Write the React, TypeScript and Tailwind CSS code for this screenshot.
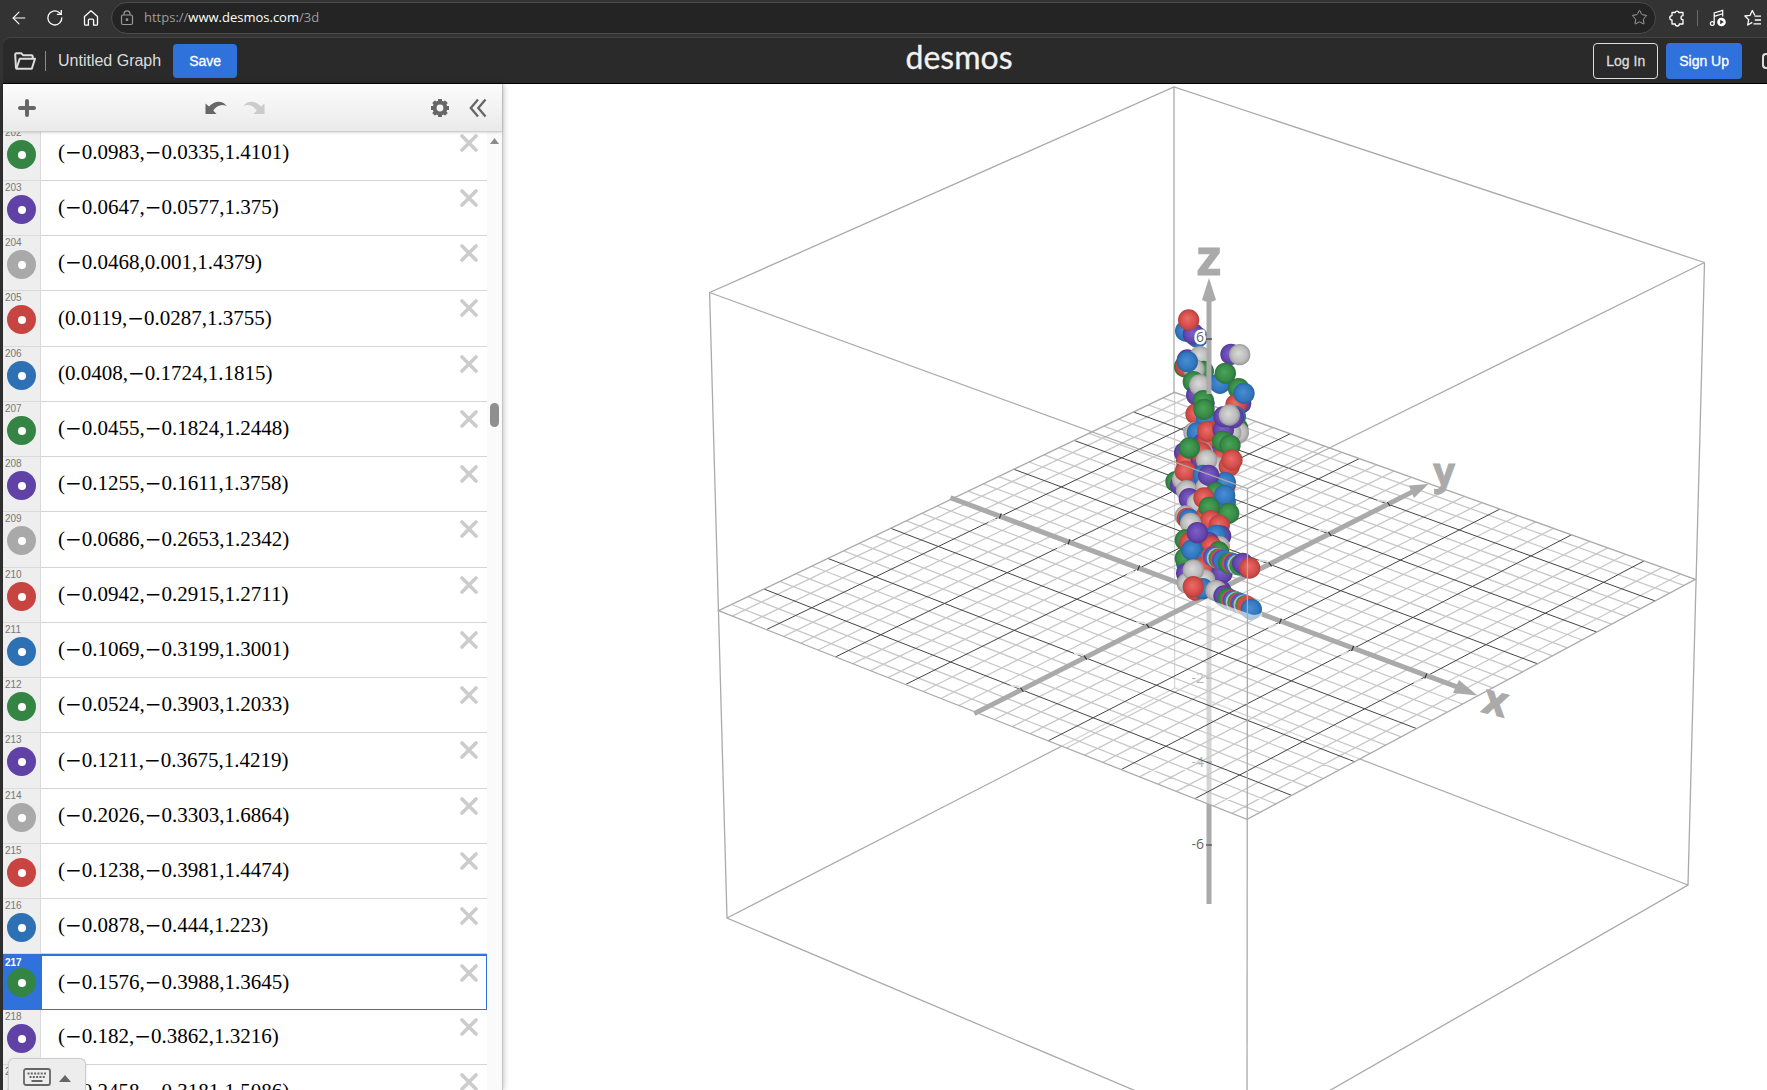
import { ArrowLeft, Star } from 'lucide-react';

type Expression = {
  id: number;
  coords: string;
};

type Point = [number, number];

const ACTIVE_ID = 217;

const expressions: Expression[] = [
  { id: 202, coords: '(−0.0983,−0.0335,1.4101)' },
  { id: 203, coords: '(−0.0647,−0.0577,1.375)' },
  { id: 204, coords: '(−0.0468,0.001,1.4379)' },
  { id: 205, coords: '(0.0119,−0.0287,1.3755)' },
  { id: 206, coords: '(0.0408,−0.1724,1.1815)' },
  { id: 207, coords: '(−0.0455,−0.1824,1.2448)' },
  { id: 208, coords: '(−0.1255,−0.1611,1.3758)' },
  { id: 209, coords: '(−0.0686,−0.2653,1.2342)' },
  { id: 210, coords: '(−0.0942,−0.2915,1.2711)' },
  { id: 211, coords: '(−0.1069,−0.3199,1.3001)' },
  { id: 212, coords: '(−0.0524,−0.3903,1.2033)' },
  { id: 213, coords: '(−0.1211,−0.3675,1.4219)' },
  { id: 214, coords: '(−0.2026,−0.3303,1.6864)' },
  { id: 215, coords: '(−0.1238,−0.3981,1.4474)' },
  { id: 216, coords: '(−0.0878,−0.444,1.223)' },
  { id: 217, coords: '(−0.1576,−0.3988,1.3645)' },
  { id: 218, coords: '(−0.182,−0.3862,1.3216)' },
  { id: 219, coords: '(−0.2458,−0.3181,1.5086)' },
];

// colours repeat every five expressions
const dotColors = ['bg-[#c74440]', 'bg-[#2d70b3]', 'bg-[#348543]', 'bg-[#6042a6]', 'bg-[#a9a9a9]'];

function BrowserBar() {
  return (
    <div className="flex h-[37px] shrink-0 items-center bg-[#333333] pb-0.5 text-white">
      <nav className="flex w-[111px] shrink-0 items-center pl-[9px]">
        <button aria-label="Back" className="w-[37px]">
          <ArrowLeft size={20} strokeWidth={1.3} />
        </button>
        <button aria-label="Refresh" className="w-9">
          <svg width="18" height="18" viewBox="0 0 18 18" fill="none" stroke="currentColor" strokeWidth="1.3">
            <path d="M15.8 8.4a7 7 0 1 1-2.6-4.9L15 5.2" />
            <path d="M15.3 1v4.4h-4.4" />
          </svg>
        </button>
        <button aria-label="Home">
          <svg width="18" height="18" viewBox="0 0 18 18" fill="none" stroke="currentColor" strokeWidth="1.3" strokeLinejoin="round">
            <path d="M2.5 7.6 9 1.8l6.5 5.8v7.6q0 1-1 1h-2.9v-5q0-1-1-1H7.4q-1 0-1 1v5H3.5q-1 0-1-1z" />
          </svg>
        </button>
      </nav>
      <div className="flex h-8 flex-1 items-center rounded-full border border-[#4b4b4b] bg-[#242424] pr-[7px] pl-2">
        <svg width="14" height="16" viewBox="0 0 14 16" fill="none" stroke="#9a9a9a" strokeWidth="1.2">
          <rect x="1.5" y="5" width="11" height="9.5" rx="1.5" />
          <path d="M4 5V3.8a3 3 0 0 1 6 0V5" />
          <circle cx="7" cy="9.7" r="0.8" fill="#9a9a9a" />
        </svg>
        <div className="ml-2.5 flex-1 font-['Open_Sans',sans-serif] text-[13px] text-[#9d9d9d]">
          https://<span className="text-white">www.desmos.com</span>/3d
        </div>
        <button aria-label="Add to favorites" className="text-[#a0a0a0]">
          <Star size={17} strokeWidth={1.4} />
        </button>
      </div>
      <div className="ml-3 flex shrink-0 items-center">
        <button aria-label="Extensions">
          <svg width="18" height="18" viewBox="0 0 18 18" fill="none" stroke="currentColor" strokeWidth="1.3" strokeLinejoin="round">
            <path d="M5 3.5h2.2a1.9 1.9 0 0 1 3.6 0H15v3.2a2 2 0 1 0 0 4v4.3h-3.7a2 2 0 0 1-4 0H4v-4a2.2 2.2 0 0 1 0-4.4V3.5z" />
          </svg>
        </button>
        <span className="mx-[11px] h-4 w-px bg-[#6a6a6a]" />
        <button aria-label="Media controls">
          <svg width="18" height="18" viewBox="0 0 18 18" fill="none" stroke="currentColor" strokeWidth="1.2">
            <circle cx="3.3" cy="14.5" r="1.9" />
            <path d="M5.2 14.5V4l8.5-2.6v6M5.2 7.4l8.5-2.6" />
            <circle cx="12.5" cy="13" r="4.3" fill="white" stroke="none" />
            <path d="M11.2 10.8v4.4l3.7-2.2z" fill="#333333" stroke="none" />
          </svg>
        </button>
        <button aria-label="Favorites" className="mr-[5px] ml-[17px]">
          <svg width="18" height="18" viewBox="0 0 18 18" fill="none" stroke="currentColor" strokeWidth="1.3" strokeLinejoin="round">
            <path d="M10.8 6.2 8.3 1.5 6.1 6.3l-5.2.7 3.8 3.7-1 5.3 4.6-2.6M10.5 7.2H17M10.8 11H17M9.5 14.8H17" />
          </svg>
        </button>
      </div>
    </div>
  );
}

function Header() {
  return (
    <header className="grid h-[47px] shrink-0 grid-cols-[1fr_auto_1fr] items-center rounded-tl-lg border-t border-b border-t-[#444444] border-b-black bg-[#2a2a2a]">
      <div className="flex items-center">
        <button aria-label="Open graph" className="ml-[11px] text-[#dddddd]">
          <svg width="22" height="18" viewBox="0 0 22 18" fill="none" stroke="currentColor" strokeWidth="2" strokeLinejoin="round">
            <path d="M2 16.5 1.2 2.5Q1.2 1.2 2.4 1.2H7.2L9 3.2H17.5Q18.7 3.2 18.7 4.4V6.5" />
            <path d="M2.4 16.7 5.7 6.8H21L17.8 16.7Z" />
          </svg>
        </button>
        <span className="ml-[9px] h-5 w-px bg-[#8a8a8a]" />
        <span className="ml-3 text-base text-[#dddddd]">Untitled Graph</span>
        <button className="ml-3 h-[34px] rounded bg-[#2f72dc] px-4 text-sm text-white [-webkit-text-stroke:0.3px]">Save</button>
      </div>
      <span className="-mt-2 ml-[148px] font-['Lato',sans-serif] text-[32px] leading-9 text-[#f2f2f2] [-webkit-text-stroke:0.3px]">desmos</span>
      <div className="flex items-center justify-end gap-2">
        <button className="h-9 rounded border border-[#dddddd] px-3 text-sm text-[#dddddd] [-webkit-text-stroke:0.3px]">Log In</button>
        <button className="h-9 rounded bg-[#2f72dc] px-[13px] text-sm text-white [-webkit-text-stroke:0.3px]">Sign Up</button>
        <button aria-label="Language" className="ml-3 h-4 w-[5px] rounded-l border-2 border-r-0 border-[#dddddd]" />
      </div>
    </header>
  );
}

function Toolbar() {
  return (
    <div className="relative z-10 flex h-12 shrink-0 items-center border-b border-[#cfcfcf] bg-linear-to-b from-[#fcfcfc] to-[#eaeaea] text-[#666666] shadow-sm">
      <button aria-label="Add item" className="ml-[15px]">
        <svg width="18" height="18" viewBox="0 0 18 18" stroke="currentColor" strokeWidth="4" strokeLinecap="round">
          <path d="M9 2v14M2 9h14" />
        </svg>
      </button>
      <div className="ml-[169px] flex items-center gap-4">
        <button aria-label="Undo">
          <svg width="22" height="14" viewBox="0 0 22 14" fill="currentColor">
            <path d="M0.5 2.5v10.5H11.5L8.2 9.5C11.5 5 16.5 2.3 21.8 5.2 17.5-.8 9.5-.5 4 5.5z" />
          </svg>
        </button>
        <button aria-label="Redo" className="text-[#cccccc]" disabled>
          <svg width="22" height="14" viewBox="0 0 22 14" fill="currentColor">
            <path d="M21.5 2.5v10.5H10.5L13.8 9.5C10.5 5 5.5 2.3.2 5.2 4.5-.8 12.5-.5 18 5.5z" />
          </svg>
        </button>
      </div>
      <button aria-label="Graph settings" className="ml-auto">
        <svg width="20" height="20" viewBox="0 0 20 20" fill="none" stroke="currentColor">
          <circle cx="10" cy="10" r="5.4" strokeWidth="4" />
          <path
            strokeWidth="4"
            d="M10 1v3M10 16v3M1 10h3M16 10h3M3.6 3.6l2.2 2.2M14.2 14.2l2.2 2.2M3.6 16.4l2.2-2.2M14.2 5.8l2.2-2.2"
          />
        </svg>
      </button>
      <button aria-label="Hide list" className="mr-[15px] ml-[19px]">
        <svg width="18" height="20" viewBox="0 0 18 20" fill="none" stroke="currentColor" strokeWidth="2.3">
          <path d="M9 1.5 1.8 10 9 18.5M16.5 1.5 9.3 10l7.2 8.5" />
        </svg>
      </button>
    </div>
  );
}

function MathText({ value }: { value: string }) {
  return (
    <span className="font-['Liberation_Serif',serif] text-[21px] leading-6 whitespace-nowrap text-black">
      {value.split(/(−)/).map((part, i) =>
        part === '−' ? (
          <span key={i} className="font-['DejaVu_Serif',serif] text-[20px] font-light">−</span>
        ) : (
          part
        ),
      )}
    </span>
  );
}

function ExpressionRow({ item }: { item: Expression }) {
  const active = item.id === ACTIVE_ID;
  return (
    <li className="flex h-[55px] shrink-0 nth-[4n]:h-[56px]">
      <div
        className={
          active
            ? 'w-[38px] shrink-0 bg-[#2f72dc] text-white'
            : 'w-[38px] shrink-0 border-r border-b border-[#dadada] bg-[#eeeeee] text-[#777777]'
        }
      >
        <div className={active ? 'pt-1 pl-0.5 text-[10px] leading-[10px] font-bold' : 'pl-0.5 text-[10px] leading-[14px]'}>{item.id}</div>
        <button
          aria-label={`Color of expression ${item.id}`}
          className={`ml-1 flex size-[29px] items-center justify-center rounded-full ${dotColors[item.id % 5]}`}
        >
          <span className="size-2 rounded-full bg-white" />
        </button>
      </div>
      <div
        className={
          active
            ? 'flex flex-1 items-center border border-t-2 border-[#2f72dc] pr-2 pb-0.5 pl-4'
            : 'flex flex-1 items-center border-b border-[#d4d4d4] pr-[9px] pb-0.5 pl-[17px]'
        }
      >
        <MathText value={item.coords} />
        <button aria-label={`Delete expression ${item.id}`} className="mt-2 ml-auto self-start text-[#cccccc]">
          <svg width="18" height="18" viewBox="0 0 18 18" stroke="currentColor" strokeWidth="3.6" strokeLinecap="round">
            <path d="M2 2l14 14M16 2 2 16" />
          </svg>
        </button>
      </div>
    </li>
  );
}

function ExpressionPanel() {
  return (
    <aside className="relative z-10 flex w-[500px] shrink-0 flex-col border-r border-[#c4c4c4] bg-white shadow-[0_0_6px_rgba(0,0,0,0.3)]">
      <Toolbar />
      <div className="flex min-h-0 flex-1">
        <ol className="-mt-1.5 flex min-h-0 flex-1 flex-col overflow-hidden">
          {expressions.map((item) => (
            <ExpressionRow key={item.id} item={item} />
          ))}
        </ol>
        <div className="flex w-[15px] shrink-0 flex-col items-center bg-[#fafafa] pt-1.5">
          <svg width="9" height="6" viewBox="0 0 9 6" fill="#8b8b8b">
            <path d="M4.5 0 9 6H0z" />
          </svg>
          <div className="mt-[259px] h-6 w-[9px] rounded-full bg-[#8f8f8f]" />
        </div>
      </div>
      <button
        aria-label="Show keypad"
        className="absolute bottom-0 left-[5px] flex h-8 w-[78px] items-center rounded-t-md border border-b-0 border-[#cccccc] bg-[#ededed] pt-1 pl-3.5 text-[#666666] shadow"
      >
        <svg width="28" height="18" viewBox="0 0 28 18" fill="none" stroke="currentColor">
          <rect x="1" y="1" width="26" height="16" rx="2" strokeWidth="1.8" />
          <path d="M4.5 5.5h19M6.5 9h16" strokeWidth="2" strokeDasharray="2 1.3" />
          <path d="M8.5 13h11" strokeWidth="2" />
        </svg>
        <svg width="12" height="7" viewBox="0 0 12 7" className="mt-1 ml-2" fill="currentColor">
          <path d="M6 0 12 7H0z" />
        </svg>
      </button>
    </aside>
  );
}

// corners of the z = 0 plane on screen
const EXTENT = 7.4;
const LEFT: Point = [718.6, 610.7];
const BACK: Point = [1174.6, 392.3];
const RIGHT: Point = [1695.4, 579.3];
const FRONT: Point = [1247.1, 819.3];

// projective map from plane coordinates to the screen
function project(x: number, y: number): Point {
  const u = (x + EXTENT) / (2 * EXTENT);
  const v = (y + EXTENT) / (2 * EXTENT);
  const dx1 = FRONT[0] - RIGHT[0];
  const dx2 = BACK[0] - RIGHT[0];
  const dx3 = LEFT[0] - FRONT[0] + RIGHT[0] - BACK[0];
  const dy1 = FRONT[1] - RIGHT[1];
  const dy2 = BACK[1] - RIGHT[1];
  const dy3 = LEFT[1] - FRONT[1] + RIGHT[1] - BACK[1];
  const det = dx1 * dy2 - dx2 * dy1;
  const g = (dx3 * dy2 - dx2 * dy3) / det;
  const h = (dx1 * dy3 - dx3 * dy1) / det;
  const w = g * u + h * v + 1;
  return [
    ((FRONT[0] - LEFT[0] + g * FRONT[0]) * u + (BACK[0] - LEFT[0] + h * BACK[0]) * v + LEFT[0]) / w,
    ((FRONT[1] - LEFT[1] + g * FRONT[1]) * u + (BACK[1] - LEFT[1] + h * BACK[1]) * v + LEFT[1]) / w,
  ];
}

function segment(a: Point, b: Point) {
  return `M${a[0].toFixed(1)} ${a[1].toFixed(1)}L${b[0].toFixed(1)} ${b[1].toFixed(1)}`;
}

function gridPath(major: boolean) {
  const parts: string[] = [];
  for (let i = -14; i <= 14; i++) {
    if (i === 0 || (i % 4 === 0) !== major) continue;
    const t = i / 2;
    parts.push(segment(project(t, -EXTENT), project(t, EXTENT)));
    parts.push(segment(project(-EXTENT, t), project(EXTENT, t)));
  }
  return parts.join('');
}

const planeOutline = `M${LEFT}L${BACK}L${RIGHT}L${FRONT}Z`;

type Shade = 'r' | 'b' | 'g' | 'p' | 'k';
type Sphere = [Shade, number, number];

// highlight, body, rim
const shades: Record<Shade, [string, string, string]> = {
  r: ['#ec6d68', '#d34c48', '#ad3e3a'],
  b: ['#4a8fd4', '#3277bf', '#27619b'],
  g: ['#4aa559', '#378a47', '#2a6d38'],
  p: ['#7d5fc8', '#6446ad', '#4e368b'],
  k: ['#dadada', '#bbbbbb', '#939393'],
};

// sphere centres in thirds of a pixel, listed back to front
const spheres: Sphere[] = [
  ['b', 137, 303], ['b', 172, 322], ['p', 160, 312], ['r', 146, 270],
  ['p', 142, 390], ['k', 180, 380], ['g', 190, 424], ['g', 134, 410], ['r', 138, 408], ['k', 162, 418], ['g', 160, 455], ['b', 142, 395],
  ['p', 170, 495], ['p', 192, 520], ['k', 179, 465],
  ['p', 273, 373], ['k', 299, 374], ['b', 240, 460], ['g', 256, 430], ['g', 296, 476], ['p', 302, 520], ['r', 288, 524], ['b', 312, 490],
  ['r', 190, 620], ['p', 180, 680], ['r', 200, 740], ['k', 190, 800], ['g', 180, 860], ['p', 200, 920], ['b', 190, 980], ['b', 140, 1000], ['r', 190, 1060],
  ['r', 240, 640], ['p', 230, 700], ['b', 230, 740], ['r', 240, 820],
  ['p', 182, 572], ['r', 168, 552], ['b', 200, 566], ['g', 190, 512], ['g', 192, 538],
  ['k', 225, 610], ['k', 162, 608], ['b', 172, 608], ['p', 190, 640], ['r', 205, 632], ['r', 203, 604],
  ['b', 286, 560], ['g', 293, 595], ['k', 295, 608], ['r', 248, 592], ['k', 272, 608], ['p', 250, 600], ['p', 280, 563], ['p', 252, 560], ['k', 268, 555],
  ['b', 256, 662], ['p', 240, 672], ['r', 240, 690], ['g', 248, 634], ['g', 270, 646],
  ['p', 134, 668], ['r', 140, 694], ['p', 184, 690], ['k', 188, 668], ['r', 183, 668], ['g', 148, 654],
  ['k', 232, 712], ['r', 268, 708], ['r', 276, 690], ['k', 200, 690],
  ['g', 108, 755], ['p', 122, 765], ['k', 128, 748], ['p', 160, 745], ['r', 136, 724], ['k', 140, 782],
  ['r', 256, 765], ['b', 190, 736], ['b', 256, 758], ['k', 198, 772], ['p', 206, 736],
  ['p', 148, 806], ['k', 172, 820], ['g', 228, 788], ['r', 192, 804], ['p', 258, 838], ['b', 256, 818], ['b', 254, 796],
  ['k', 136, 858], ['r', 142, 865], ['b', 148, 868], ['r', 200, 856], ['g', 266, 850], ['g', 208, 832],
  ['r', 212, 872], ['r', 238, 886], ['k', 152, 880], ['p', 242, 918], ['b', 228, 916],
  ['g', 136, 930], ['g', 136, 985], ['r', 150, 938], ['k', 238, 950], ['p', 206, 938], ['r', 214, 950], ['g', 236, 966], ['g', 172, 980], ['b', 156, 960], ['p', 172, 908],
  ['b', 200, 990], ['p', 140, 1030], ['k', 142, 1060], ['r', 188, 1012], ['p', 246, 1030], ['r', 166, 1080], ['k', 194, 1050], ['b', 188, 1076], ['k', 160, 1020], ['r', 160, 1070],
];

const cycle: Shade[] = ['r', 'b', 'g', 'p', 'k'];

// closely spaced points that read as a striped rod
function Rod({ from, to, steps, seed }: { from: Point; to: Point; steps: number; seed: number }) {
  return (
    <>
      {Array.from({ length: steps }, (_, i) => (
        <circle
          key={i}
          cx={from[0] + ((to[0] - from[0]) * i) / steps}
          cy={from[1] + ((to[1] - from[1]) * i) / steps}
          r="31"
          fill={shades[cycle[(i * 3 + seed) % 5]][1]}
        />
      ))}
    </>
  );
}

function Spheres({ items }: { items: Sphere[] }) {
  return (
    <>
      {items.map(([shade, x, y], i) => (
        <circle key={i} cx={x} cy={y} r="32" fill={`url(#shade-${shade})`} />
      ))}
    </>
  );
}

function Graph() {
  const ticks = [-6, -4, -2, 2, 4, 6];
  return (
    <svg
      className="h-full w-full"
      viewBox="503 84 1264 1006"
      preserveAspectRatio="xMidYMid slice"
      role="img"
      aria-label="3D graph"
      fill="none"
    >
      <defs>
        {cycle.map((shade) => (
          <radialGradient key={shade} id={`shade-${shade}`} cx="0.5" cy="0.5" r="0.52" fx="0.44" fy="0.42">
            <stop offset="0" stopColor={shades[shade][0]} />
            <stop offset="0.7" stopColor={shades[shade][1]} />
            <stop offset="1" stopColor={shades[shade][2]} />
          </radialGradient>
        ))}
      </defs>

      {/* everything below the plane */}
      <g stroke="#aaaaaa" strokeWidth="1.2">
        <path d="M727 918L1175 688L1688 885M1174.6 392V688" />
        <path d="M1209 597V904" strokeWidth="5" />
        <path d="M1206 678h6M1206 762h6M1206 845h6" stroke="#333333" />
      </g>
      <g className="font-['Open_Sans',sans-serif]" fontSize="14" fill="#666666" textAnchor="end">
        <text x="1204" y="683">-2</text>
        <text x="1204" y="767">-4</text>
        <text x="1204" y="849">-6</text>
      </g>
      <path d={planeOutline} fill="white" fillOpacity="0.5" />
      <path d={gridPath(false)} stroke="#c8c8c8" strokeWidth="1.3" />
      <path d={gridPath(true)} stroke="#444444" strokeWidth="1" />
      <path d={planeOutline} stroke="#aaaaaa" strokeWidth="1.3" />

      {/* back of the box */}
      <path d="M1174 87V392M709.6 292.5L1174 87L1704.5 262.5" stroke="#aaaaaa" strokeWidth="1.3" />

      <g stroke="#aaaaaa" strokeWidth="5" strokeLinecap="square">
        <path d={segment(project(-EXTENT, 0), [1460, 688])} />
        <path d={segment(project(0, -EXTENT), [1412, 492])} />
      </g>
      <g fill="#aaaaaa">
        <path d="M1477.5 695.5L1459 680L1453 693Z" />
        <path d="M1428.5 484L1409 485.5L1414 498Z" />
        <path d="M1209 278L1216 300Q1209 304 1202 300Z" />
      </g>
      <g stroke="#333333" strokeWidth="1.2">
        {ticks.map((t) => {
          const [x1, y1] = project(t, 0);
          const [x2, y2] = project(0, t);
          return <path key={t} d={`M${x1 + 1} ${y1 - 3}l-2 5M${x2 - 1} ${y2 - 2}l3 4`} />;
        })}
      </g>
      <g stroke="#dddddd" strokeWidth="2">
        {ticks.map((t) => {
          const [x1, y1] = project(t, 0);
          const [x2, y2] = project(0, t);
          return <path key={t} d={`M${x1 - 12} ${y1 + 6}l8 -3M${x2 - 11} ${y2 - 4}l9 1`} />;
        })}
      </g>

      <g className="font-['Open_Sans',sans-serif] font-bold" fill="#aaaaaa" stroke="#aaaaaa" textAnchor="middle">
        <text x="1209" y="275" fontSize="50">z</text>
        <text x="1444" y="485" fontSize="38">y</text>
        <text x="1495" y="715" fontSize="42" transform="rotate(14 1495 704)">x</text>
      </g>

      <g transform="translate(1140 230) scale(0.3333)">
        <Spheres items={spheres} />
        <Rod from={[215, 978]} to={[258, 994]} steps={8} seed={0} />
        <Spheres items={[['g', 266, 1000]]} />
        <Rod from={[272, 998]} to={[304, 1008]} steps={6} seed={2} />
        <Spheres items={[['b', 322, 1012], ['p', 308, 1000], ['r', 329, 1014]]} />
        <Spheres items={[['p', 242, 1082], ['k', 228, 1082], ['p', 252, 1098], ['g', 264, 1106]]} />
        <Rod from={[274, 1110]} to={[326, 1130]} steps={11} seed={0} />
        <Spheres items={[['b', 334, 1138]]} />
        <path d="M200 1106L262 1128L330 1152Q352 1160 366 1146L366 1174L300 1166L200 1126Z" fill="white" fillOpacity="0.6" />
      </g>

      {/* z axis passes in front of the upper spheres */}
      <path d="M1209 298V394" stroke="#aaaaaa" strokeWidth="5" />
      <path d="M1206 339h6" stroke="#333333" strokeWidth="1.2" />
      <text
        x="1200"
        y="342"
        className="font-['Open_Sans',sans-serif]"
        fontSize="14"
        fill="#666666"
        stroke="white"
        strokeWidth="5"
        strokeLinejoin="round"
        paintOrder="stroke"
        textAnchor="middle"
      >
        6
      </text>

      {/* front of the box */}
      <g stroke="#aaaaaa" strokeWidth="1.3">
        <path d="M709.6 292.5L1247.5 488.5L1704.5 262.5" />
        <path d="M1247.5 488.5L1247 1138" />
        <path d="M709.6 292.5L727 918L1247 1138L1688 885L1704.5 262.5" />
      </g>
    </svg>
  );
}

export default function App() {
  return (
    <div className="flex h-screen flex-col overflow-hidden bg-[#333333] font-['Liberation_Sans',Arial,sans-serif]">
      <BrowserBar />
      <div className="flex min-h-0 flex-1 flex-col pl-[3px]">
        <Header />
        <main className="flex min-h-0 flex-1 bg-white">
          <ExpressionPanel />
          <section className="min-w-0 flex-1 overflow-hidden">
            <Graph />
          </section>
        </main>
      </div>
    </div>
  );
}
